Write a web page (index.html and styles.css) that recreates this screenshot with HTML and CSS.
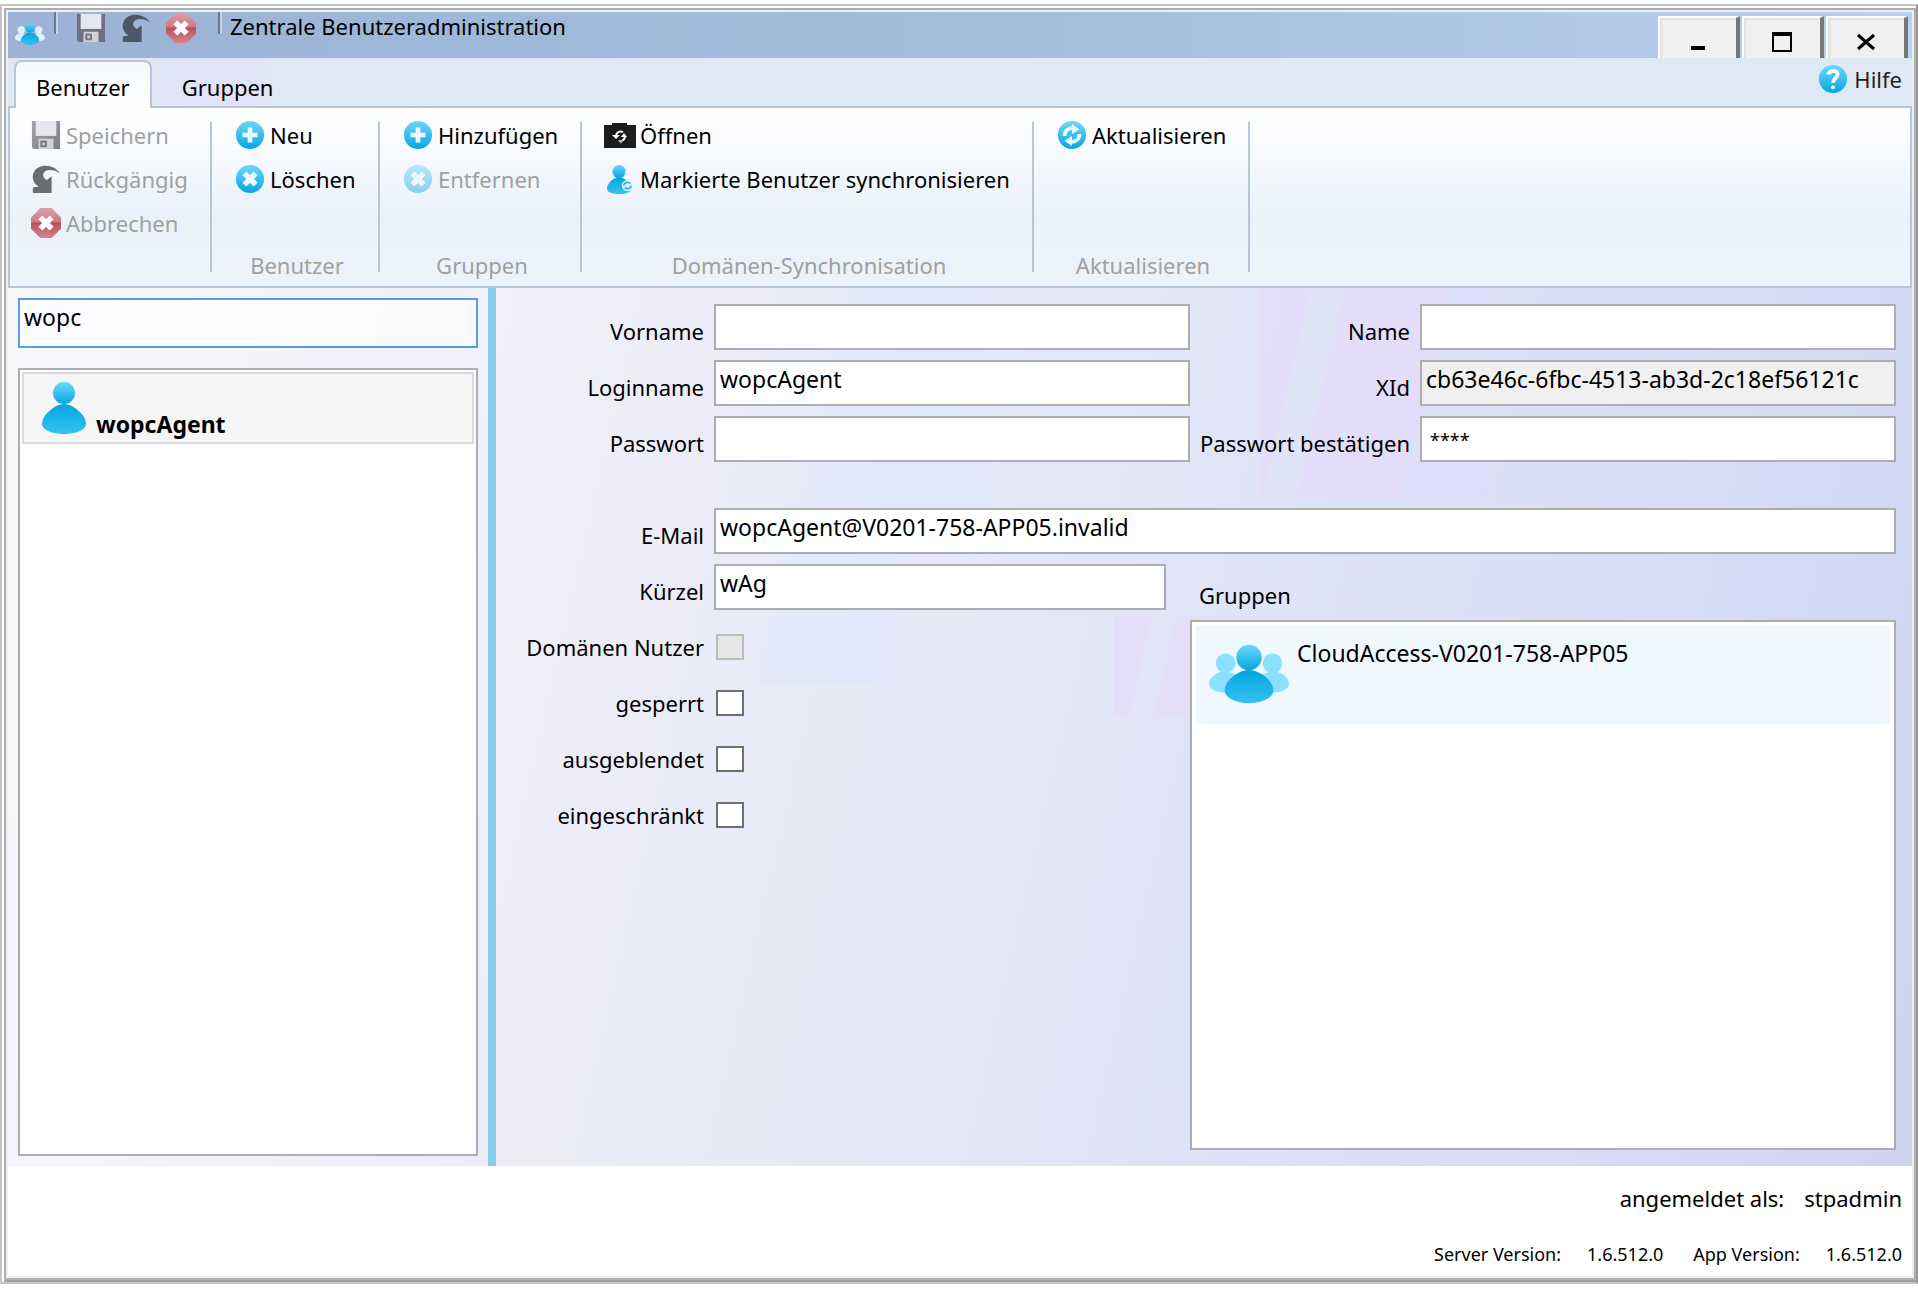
FILE: index.html
```html
<!DOCTYPE html>
<html lang="de">
<head>
  <meta charset="UTF-8" />
  <meta name="viewport" content="width=device-width, initial-scale=1" />
  <title>Zentrale Benutzeradministration</title>
  <link rel="stylesheet" href="styles.css">
</head>
<body>
  <svg class="sprite" width="0" height="0" aria-hidden="true">
    <defs>
      <linearGradient id="blue" x1="0" y1="0" x2="0" y2="1">
        <stop offset="0" stop-color="#6dd8fb" />
        <stop offset="1" stop-color="#06a5e0" />
      </linearGradient>
      <linearGradient id="body" x1="0" y1="0" x2="0" y2="1">
        <stop offset="0" stop-color="#03a4e0" />
        <stop offset="1" stop-color="#36c2f0" />
      </linearGradient>
      <linearGradient id="red" x1="0" y1="0" x2="0" y2="1">
        <stop offset="0" stop-color="#dda0a6" />
        <stop offset="0.45" stop-color="#cf7a82" />
        <stop offset="0.5" stop-color="#b9535e" />
        <stop offset="1" stop-color="#d5838a" />
      </linearGradient>
      <linearGradient id="steel" x1="0" y1="0" x2="1" y2="1">
        <stop offset="0" stop-color="#a5a5a9" />
        <stop offset="1" stop-color="#7c7c81" />
      </linearGradient>
    </defs>
    <symbol id="save" viewBox="0 0 32 32">
      <path d="M1 1h30v30H3l-2-2z" />
      <path d="M5 1h22v16H5z" fill="#e6e6ee" />
      <path d="M8 20h16v11H8z" fill="#d0d0d8" />
      <path d="M10 22h7v7h-7z" fill="#77777c" />
      <path d="M12 24h3v3h-3z" fill="#c9c9cd" />
    </symbol>
    <symbol id="undo" viewBox="0 0 32 32">
      <path d="M31 10C27 4 20 1 13 2 5 3 1 9 2 16c1 4 3 6 6 8l-6 1v6h20V13l-5 4c-4-2-5-5-3-8 3-4 11-3 17 1z" fill="currentColor" />
    </symbol>
    <symbol id="cancel" viewBox="0 0 32 32">
      <path d="M10 0h12l10 10v12L22 32H10L0 22V10z" fill="url(#red)" />
      <path d="M10 10l12 12M22 10L10 22" stroke="#fff" stroke-width="6" />
    </symbol>
    <symbol id="add" viewBox="0 0 32 32">
      <circle cx="16" cy="16" r="15" fill="url(#blue)" />
      <path d="M16 8v16M8 16h16" stroke="#eefaff" stroke-width="5" />
    </symbol>
    <symbol id="remove" viewBox="0 0 32 32">
      <circle cx="16" cy="16" r="15" fill="url(#blue)" />
      <path d="M10 10l12 12M22 10L10 22" stroke="#eefaff" stroke-width="6" />
    </symbol>
    <symbol id="help" viewBox="0 0 32 32">
      <circle cx="16" cy="16" r="15" fill="url(#blue)" />
      <path d="M11 11c1-5 10-5 10 0 0 4-5 4-5 9" fill="none" stroke="#fff" stroke-width="4" />
      <circle cx="16" cy="25" r="2" fill="#fff" />
    </symbol>
    <symbol id="refresh" viewBox="0 0 32 32">
      <circle cx="16" cy="16" r="15" fill="url(#blue)" />
      <path d="M8 17c0-6 5-9 10-8M24 15c0 6-5 9-10 8" fill="none" stroke="#e6f8ff" stroke-width="4" />
      <path d="M16 4l8 6-8 5zM16 28l-8-6 8-5z" fill="#e6f8ff" />
    </symbol>
    <symbol id="camera" viewBox="0 0 32 26">
      <path d="M0 3h8V1h15v2h9v23H0z" fill="#1c1c1c" />
      <path d="M12 13a5 5 0 0 1 7-3M21 14a5 5 0 0 1-6 5" fill="none" stroke="#fff" stroke-width="2" />
      <path d="M8 13h8l-4 4zM17 15l3-4 3 4z" fill="#fff" />
      <path d="M14 18l5 0-2 4z" fill="#aaa" />
    </symbol>
    <symbol id="user" viewBox="0 0 44 52">
      <ellipse cx="22" cy="11" rx="11" ry="11" fill="url(#blue)" />
      <path d="M22 22C13 22 0 33 0 42c0 6 10 10 22 10s22-4 22-10c0-9-13-20-22-20z" fill="url(#body)" />
    </symbol>
    <symbol id="usersync" viewBox="0 0 32 32">
      <circle cx="15" cy="8" r="7" fill="url(#blue)" />
      <path d="M15 14C9 14 2 21 2 26c0 4 6 6 13 6s13-2 13-6c0-5-7-12-13-12z" fill="url(#body)" />
      <circle cx="24" cy="23" r="6" fill="#dff4fd" />
      <path d="M20 23a4 4 0 0 1 7-2M28 23a4 4 0 0 1-7 2" fill="none" stroke="#37b4e6" stroke-width="2" />
    </symbol>
    <symbol id="group" viewBox="0 0 82 60">
      <circle cx="17" cy="19" r="10" />
      <path d="M17 27C10 27 0 33 0 40c0 6 8 9 17 9h10V30z" />
      <circle cx="65" cy="19" r="10" />
      <path d="M65 27c7 0 17 6 17 13 0 6-8 9-17 9H55V30z" />
      <circle cx="41" cy="13" r="13" fill="url(#blue)" />
      <path d="M41 26c-11 0-25 11-25 21 0 7 11 13 25 13s25-6 25-13c0-10-14-21-25-21z" fill="url(#body)" />
    </symbol>
  </svg>

  <div class="window">
    <header class="titlebar">
      <svg class="app-icon"><use href="#group" /></svg>
      <span class="divider"></span>
      <div class="quick">
        <button aria-label="Speichern" disabled><svg><use href="#save" /></svg></button>
        <button aria-label="Rückgängig" disabled><svg><use href="#undo" /></svg></button>
        <button aria-label="Abbrechen" disabled><svg><use href="#cancel" /></svg></button>
      </div>
      <span class="divider"></span>
      <h1>Zentrale Benutzeradministration</h1>
      <div class="window-buttons">
        <button aria-label="Minimieren"><svg viewBox="0 0 20 20"><path d="M3 14h14v4H3z" /></svg></button>
        <button aria-label="Maximieren"><svg viewBox="0 0 20 20"><path d="M0 0h20v20H0zM2 4v14h16V4z" fill-rule="evenodd" /></svg></button>
        <button aria-label="Schließen"><svg viewBox="0 0 20 20"><path d="M2 3l16 14M18 3L2 17" stroke="#000" stroke-width="3" /></svg></button>
      </div>
    </header>

    <nav class="tabs">
      <button class="tab active">Benutzer</button>
      <button class="tab">Gruppen</button>
      <a class="help" href="#"><svg><use href="#help" /></svg>Hilfe</a>
    </nav>

    <div class="ribbon">
      <div class="group group-edit">
        <button disabled><svg><use href="#save" /></svg>Speichern</button>
        <button disabled><svg><use href="#undo" /></svg>Rückgängig</button>
        <button disabled><svg><use href="#cancel" /></svg>Abbrechen</button>
      </div>
      <div class="group group-user">
        <button><svg><use href="#add" /></svg>Neu</button>
        <button><svg><use href="#remove" /></svg>Löschen</button>
        <span class="caption">Benutzer</span>
      </div>
      <div class="group group-groups">
        <button><svg><use href="#add" /></svg>Hinzufügen</button>
        <button class="faded" disabled><svg><use href="#remove" /></svg>Entfernen</button>
        <span class="caption">Gruppen</span>
      </div>
      <div class="group group-sync">
        <button><svg><use href="#camera" /></svg>Öffnen</button>
        <button><svg><use href="#usersync" /></svg>Markierte Benutzer synchronisieren</button>
        <span class="caption">Domänen-Synchronisation</span>
      </div>
      <div class="group group-refresh">
        <button><svg><use href="#refresh" /></svg>Aktualisieren</button>
        <span class="caption">Aktualisieren</span>
      </div>
    </div>

    <main class="content">
      <aside class="sidebar">
        <input type="text" class="search" value="wopc" aria-label="Benutzer suchen" />
        <ul class="list users">
          <li><svg><use href="#user" /></svg><strong>wopcAgent</strong></li>
        </ul>
      </aside>

      <form class="form">
        <label for="vorname">Vorname</label>
        <input type="text" id="vorname" />
        <label for="name">Name</label>
        <input type="text" id="name" />

        <label for="login">Loginname</label>
        <input type="text" id="login" value="wopcAgent" />
        <label for="xid">XId</label>
        <input type="text" id="xid" value="cb63e46c-6fbc-4513-ab3d-2c18ef56121c" readonly />

        <label for="passwort">Passwort</label>
        <input type="text" id="passwort" />
        <label for="passwort2">Passwort bestätigen</label>
        <input type="text" id="passwort2" class="masked" value="****" />

        <label for="email" class="spaced">E-Mail</label>
        <input type="text" id="email" class="spaced wide" value="wopcAgent@V0201-758-APP05.invalid" />

        <label for="kuerzel">Kürzel</label>
        <input type="text" id="kuerzel" class="short" value="wAg" />
        <span class="list-title" id="gruppen-title">Gruppen</span>

        <label for="domaene">Domänen Nutzer</label>
        <input type="checkbox" id="domaene" disabled />
        <label for="gesperrt">gesperrt</label>
        <input type="checkbox" id="gesperrt" />
        <label for="ausgeblendet">ausgeblendet</label>
        <input type="checkbox" id="ausgeblendet" />
        <label for="eingeschraenkt">eingeschränkt</label>
        <input type="checkbox" id="eingeschraenkt" />

        <ul class="list groups" aria-labelledby="gruppen-title">
          <li><svg><use href="#group" /></svg>CloudAccess-V0201-758-APP05</li>
        </ul>
      </form>
    </main>

    <footer class="status">
      <p class="login"><span>angemeldet als:</span><span>stpadmin</span></p>
      <p class="versions">
        <span>Server Version:</span><span>1.6.512.0</span>
        <span class="app">App Version:</span><span>1.6.512.0</span>
      </p>
    </footer>
  </div>
</body>
</html>
```
FILE: styles.css
```css
* {
  box-sizing: border-box;
}
body {
  margin: 0;
  padding: 4px 0 6px;
  height: 100vh;
  display: flex;
  background: #fff;
  color: #000;
  font-family: "Noto Sans", "Open Sans", sans-serif;
  font-size: 22px;
  line-height: 28px;
}
button,
input {
  font: inherit;
  color: inherit;
}
button {
  border: 0;
  padding: 0;
  background: none;
}
ul,
h1,
p {
  margin: 0;
  padding: 0;
  list-style: none;
}
.sprite {
  position: absolute;
}

/* window frame */
.window {
  flex: 1;
  min-width: 0;
  display: flex;
  flex-direction: column;
  padding: 6px 4px 6px 6px;
  border: 2px solid #c4c4c4;
  border-right-color: #999;
  box-shadow: inset 2px 2px #fff, inset 4px 4px #adadad, inset 0 -2px #a0a0a0, inset -2px -4px #b0b0b0, inset 6px 6px #eee, inset -4px -6px #eee;
}
.titlebar {
  display: flex;
  align-items: flex-start;
  height: 46px;
  padding-right: 4px;
  background: linear-gradient(90deg, #9db2d6, #9fb8d9 25%, #a8c0df 60%, #b3c9e7 85%, #bad2ee);
}
.app-icon {
  width: 30px;
  height: 24px;
  margin: 10px 9px 0 7px;
  fill: #dcf2ff;
}
.divider {
  width: 4px;
  height: 22px;
  border-left: 2px solid #66779a;
  border-right: 2px solid #c6d3e9;
}
.quick {
  display: flex;
  gap: 15px;
  margin: 0 22px 0 18px;
  color: #4b5763;
  fill: #6f6f86;
}
.quick button,
.quick svg {
  display: block;
  width: 30px;
  height: 32px;
}
h1 {
  flex: 1;
  margin-left: 8px;
  font-size: 22px;
  line-height: 28px;
  font-weight: normal;
  white-space: nowrap;
}
.window-buttons {
  display: flex;
  gap: 2px;
  margin-top: 4px;
}
.window-buttons button {
  width: 82px;
  height: 42px;
  padding-top: 8px;
  background: #efefef;
  border: solid;
  border-width: 2px 4px 0 2px;
  border-color: #fff #777 #fff #fff;
  box-shadow: inset 2px 2px #e1e1e1;
}
.window-buttons svg {
  display: block;
  width: 20px;
  height: 20px;
  margin: 0 auto;
}

/* tabs */
.tabs {
  display: flex;
  height: 50px;
  padding: 2px 10px 0 6px;
  border-bottom: 2px solid #b5c6d8;
  background: linear-gradient(90deg, #dfe9f5, #e1e4f8 10%, #e1e4f8 13%, #dfe9f5 14%);
}
.tab {
  height: 48px;
  padding: 6px 30px 0;
}
.tab.active {
  padding: 4px 20px 0;
  border: 2px solid #b5c6d8;
  border-bottom: 0;
  border-radius: 8px 8px 0 0;
  background: linear-gradient(#f4f8fc, #fff);
}
.help {
  display: flex;
  gap: 6px;
  height: 38px;
  align-items: center;
  margin-left: auto;
  color: #222;
  text-decoration: none;
}
.help svg {
  width: 30px;
  height: 30px;
}

/* ribbon */
.ribbon {
  display: flex;
  height: 180px;
  padding-top: 14px;
  border: 2px solid #b5c6d8;
  border-top: 0;
  background: linear-gradient(#fefefe, #f6f9fd 30%, #eaf1f9 60%, #edf3fa);
}
.group {
  display: flex;
  flex-direction: column;
  gap: 18px;
  height: 150px;
  padding-left: 22px;
  border-right: 2px solid #b5c6d8;
}
.group-edit {
  width: 202px;
  padding-left: 20px;
}
.group-user {
  width: 168px;
}
.group-groups {
  width: 202px;
}
.group-sync {
  width: 452px;
}
.group-refresh {
  width: 216px;
}
.group button {
  display: flex;
  align-items: center;
  gap: 4px;
  height: 26px;
  white-space: nowrap;
}
.group button:disabled {
  color: #a0a0a0;
}
.group svg {
  width: 32px;
  height: 30px;
  color: #6b6d70;
  fill: url(#steel);
}
.faded svg {
  opacity: 0.45;
}
.caption {
  margin: auto 18px -7px 0;
  text-align: center;
  color: #a0a0a0;
}

/* main area */
.content {
  flex: 1;
  display: flex;
  background:
    linear-gradient(103deg, rgba(232, 216, 252, 0.5) 18%, transparent 19%, transparent 30%, rgba(232, 216, 252, 0.5) 31%, rgba(232, 216, 252, 0.5) 66%, rgba(220, 220, 255, 0.5) 70%) 1252px 0 / 228px 212px no-repeat,
    linear-gradient(103deg, rgba(232, 216, 252, 0.5) 9%, transparent 10%, transparent 15%, rgba(232, 216, 252, 0.5) 16%, rgba(232, 216, 252, 0.5) 66%, rgba(220, 220, 255, 0.5) 70%) 1106px 328px / 380px 100px no-repeat,
    linear-gradient(103deg, transparent 34%, rgba(222, 232, 255, 0.5) 44%) 720px 0 / 260px 230px no-repeat,
    linear-gradient(103deg, transparent 34%, rgba(222, 232, 255, 0.5) 44%) 690px 246px / 200px 150px no-repeat,
    linear-gradient(103deg, #f8f8fc, #efeff9 27%, #e4e7f7 52%, #dadef5 78%, #cfd4f3);
}
.sidebar {
  display: flex;
  flex-direction: column;
  gap: 20px;
  width: 488px;
  padding: 10px;
  border-right: 8px solid #87ceeb;
}
input {
  width: 100%;
  height: 46px;
  margin: 0;
  padding: 0 4px 8px;
  border: 2px solid #abadb3;
  border-radius: 0;
  background: #fff;
  font-size: 23px;
  outline: 0;
}
.search {
  height: 50px;
  padding-bottom: 12px;
  border-color: #569de5;
  background: rgba(255, 255, 255, 0.65);
}
.list {
  border: 2px solid #abadb3;
  background: #fff;
  font-size: 23px;
}
.users {
  flex: 1;
  padding: 2px;
}
.users li {
  display: flex;
  align-items: flex-end;
  gap: 10px;
  height: 72px;
  padding: 0 18px 4px;
  border: 2px solid #dadada;
  background: #f5f5f5;
}
.users svg {
  width: 44px;
  height: 52px;
  margin-bottom: 4px;
}
.form {
  flex: 1;
  display: grid;
  grid-template-columns: 218px 1fr 230px 1fr;
  grid-template-rows: repeat(3, 46px) 82px repeat(5, 46px) 1fr;
  row-gap: 10px;
  padding: 16px;
  padding-left: 0;
}
label {
  grid-column: 1;
  padding: 13px 10px 0 0;
  text-align: right;
  white-space: nowrap;
}
input + label {
  grid-column: auto;
}
.spaced {
  margin-top: 36px;
}
.wide {
  grid-column: 2 / -1;
}
.short {
  width: calc(100% - 24px);
}
input[readonly] {
  background: #f0f0f0;
}
.masked {
  padding: 2px 8px 0;
  font-size: 18px;
}
.list-title {
  grid-column: 3 / -1;
  padding: 17px 9px 0;
}
input[type="checkbox"] {
  appearance: none;
  grid-column: 2;
  width: 28px;
  height: 26px;
  margin: 14px 2px 0;
  padding: 0;
  border-color: #707070;
}
input[type="checkbox"]:disabled {
  border-color: #bcbcbc;
  background: #e6e6e6;
}
.groups {
  grid-column: 3 / -1;
  grid-row: 6 / -1;
  padding: 4px;
}
.groups li {
  display: flex;
  gap: 8px;
  height: 98px;
  padding: 13px;
  background: #eff7ff;
}
.groups svg {
  width: 80px;
  height: 70px;
  fill: #8be0ff;
}

/* status bar */
.status {
  height: 110px;
  padding: 18px 10px 0;
  background: #fff;
}
.status p {
  display: flex;
  justify-content: flex-end;
  gap: 20px;
}
.status .versions {
  gap: 26px;
  margin-top: 28px;
  font-size: 18px;
}
.app {
  margin-left: 4px;
}
```
